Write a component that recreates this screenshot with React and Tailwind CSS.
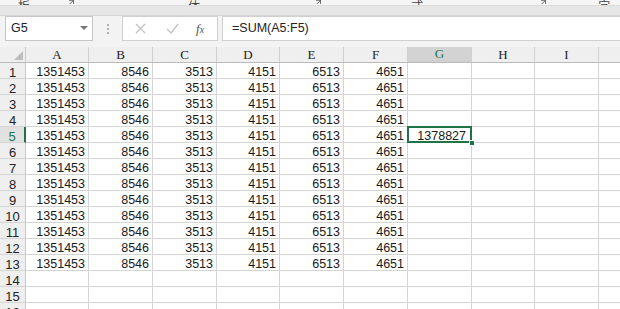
import React from "react";

const colWidths = [63, 64, 64, 63, 64, 64, 64, 63, 64, 21];
const colNames = ["A", "B", "C", "D", "E", "F", "G", "H", "I", ""];
const rowData = ["1351453", "8546", "3513", "4151", "6513", "4651"];

const Cell = ({ width, children, last }) => (
  <div
    className={`h-[16px] shrink-0 border-b border-[#d4d4d4] px-[3px] pt-[3px] text-right text-[12.5px] leading-[13px] text-[#1a1a1a] ${
      last ? "" : "border-r"
    }`}
    style={{ width }}
  >
    {children}
  </div>
);

// little dialog-launcher mark at the foot of a ribbon group
const Launcher = ({ className }) => (
  <svg className={className} width="6" height="5" viewBox="0 0 6 5">
    <path d="M0 0 L5 0 L5 4 M1 4 L5 0" stroke="#555" strokeWidth="1" fill="none" />
  </svg>
);

const App = () => {
  const rows = Array.from({ length: 16 }, (_, i) => i + 1);

  return (
    <div
      className="w-[620px] h-[309px] overflow-hidden bg-white"
      style={{ fontFamily: '"Liberation Sans", "Noto Sans CJK SC", sans-serif' }}
    >
      {/* ribbon bottom, cut off */}
      <div className="flex h-[5px] items-end overflow-hidden bg-[#f5f5f5] text-[12px] leading-[12px] text-[#444]">
        <span className="ml-[18px] mb-[-8px]">剪贴板</span>
        <Launcher className="ml-[18px] mb-[0px]" />
        <span className="ml-[114px] mb-[-8px]">字体</span>
        <Launcher className="ml-[106px]" />
        <span className="ml-[90px] mb-[-8px]">对齐方式</span>
        <Launcher className="ml-[86px]" />
        <span className="ml-[52px] mb-[-8px]">数字</span>
      </div>
      <div className="h-[10px] bg-[#e6e6e6] border-t border-[#dcdcdc]" />

      {/* formula bar */}
      <div className="flex h-[32px] items-start bg-[#f3f3f3] pl-[5px] border-t border-[#d6d6d6]">
        <div className="flex h-[25px] w-[88px] items-center justify-between border border-[#c6c6c6] bg-white pl-[5px] pr-[4px] text-[12.5px] text-[#222]">
          <span>G5</span>
          <svg width="8" height="5" viewBox="0 0 8 5">
            <path d="M0 0 L8 0 L4 4 Z" fill="#777" />
          </svg>
        </div>
        <div className="flex h-[25px] w-[29px] flex-col items-center justify-center gap-[2px]">
          <div className="h-[2px] w-[2px] bg-[#b0b0b0]" />
          <div className="h-[2px] w-[2px] bg-[#b0b0b0]" />
          <div className="h-[2px] w-[2px] bg-[#b0b0b0]" />
        </div>
        <div className="flex h-[25px] w-[96px] items-center border border-[#d0d0d0] bg-white">
          <svg className="ml-[12px]" width="11" height="11" viewBox="0 0 11 11">
            <path d="M1 1 L10 10 M10 1 L1 10" stroke="#c2c2c2" strokeWidth="1.3" />
          </svg>
          <svg className="ml-[20px]" width="13" height="11" viewBox="0 0 13 11">
            <path d="M1 6 L5 10 L12 1" stroke="#c2c2c2" strokeWidth="1.3" fill="none" />
          </svg>
          <span
            className="ml-[17px] text-[13px] italic text-[#555]"
            style={{ fontFamily: '"Liberation Serif", serif' }}
          >
            f<span className="text-[10px]">x</span>
          </span>
        </div>
        <div className="ml-[4px] flex h-[25px] flex-1 items-center border border-r-0 border-[#d0d0d0] bg-white pl-[9px] text-[12.5px] text-[#222]">
          =SUM(A5:F5)
        </div>
      </div>

      {/* column headers */}
      <div className="flex h-[16px] bg-[#efefef] border-b border-[#bcbcbc]">
        <div className="relative h-full w-[26px] shrink-0 border-r border-[#c8c8c8]">
          <svg className="absolute right-[2px] bottom-[2px]" width="9" height="9" viewBox="0 0 9 9">
            <path d="M9 0 L9 9 L0 9 Z" fill="#bdbdbd" />
          </svg>
        </div>
        {colWidths.map((w, i) => (
          <div
            key={i}
            className={`flex h-full shrink-0 items-center justify-center text-[13px] ${
              i === 6
                ? "bg-[#d3d3d3] text-[#217346] border-b-2 border-[#217346]"
                : "text-[#222]"
            } ${i < 9 ? "border-r border-[#d0d0d0]" : ""}`}
            style={{ width: w, fontFamily: '"Liberation Serif", serif' }}
          >
            {colNames[i]}
          </div>
        ))}
      </div>

      {/* rows */}
      {rows.map((r) => (
        <div key={r} className="flex">
          <div
            className={`h-[16px] w-[26px] shrink-0 border-b border-[#d4d4d4] pt-[3px] text-center text-[13px] leading-[13px] ${
              r === 5
                ? "bg-[#e1e1e1] text-[#217346] border-r-2 border-r-[#217346]"
                : "bg-[#efefef] text-[#222] border-r border-r-[#c8c8c8]"
            }`}
          >
            {r}
          </div>
          {colWidths.map((w, i) => {
            if (r === 5 && i === 6) {
              return (
                <div
                  key={i}
                  className="relative h-[16px] shrink-0 border-b border-r border-[#d4d4d4]"
                  style={{ width: w }}
                >
                  <div className="absolute left-[-1px] top-[-1px] right-[-1px] bottom-[-1px] border-2 border-[#217346] pr-[4px] pt-[2px] text-right text-[12.5px] leading-[13px] text-[#1a1a1a]">
                    1378827
                  </div>
                  <div className="absolute right-[-4px] bottom-[-4px] h-[6px] w-[6px] border border-white bg-[#217346]" />
                </div>
              );
            }
            return (
              <Cell key={i} width={w} last={i === 9}>
                {r <= 13 && i < 6 ? rowData[i] : ""}
              </Cell>
            );
          })}
        </div>
      ))}
    </div>
  );
};

export default App;
